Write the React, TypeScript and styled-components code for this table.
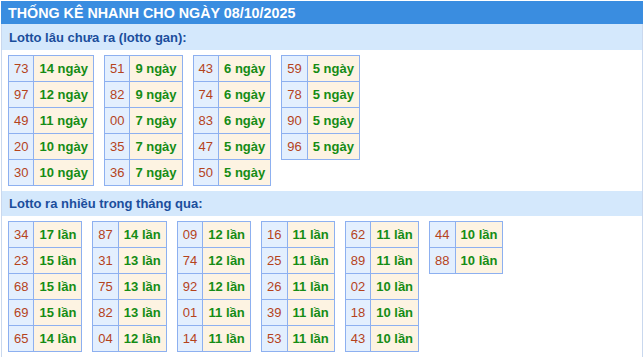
import styled, { createGlobalStyle } from "styled-components";

const GlobalStyle = createGlobalStyle`
  body {
    margin: 0;
    background: #fff;
    font-family: "Liberation Sans", Arial, sans-serif;
  }
`;

const Board = styled.div`
  width: 640px;
  margin: 1px 0 0 1px;
  border-left: 1px solid #c9d8ee;
  border-right: 1px solid #c9d8ee;
`;

const Title = styled.div`
  height: 23px;
  margin: 0 -1px;
  padding: 0 7px;
  display: flex;
  align-items: center;
  background: #3a8de0;
  color: #fff;
  font-size: 14.3px;
  font-weight: bold;
`;

const SectionHead = styled.div<{ $tall?: boolean }>`
  height: ${(p) => (p.$tall ? "26px" : "25px")};
  padding: 0 7px;
  display: flex;
  align-items: center;
  background: #d4e8fc;
  color: #1b4e9c;
  font-size: 13px;
  font-weight: bold;
`;

const Tables = styled.div`
  display: flex;
  flex-wrap: wrap;
  align-items: flex-start;
  gap: 10px;
  padding: 5px 6px 5px;
`;

const Table = styled.table`
  border-collapse: collapse;
  font-size: 13px;
`;

const Cell = styled.td<{ $kind: "num" | "val" }>`
  height: 25px;
  padding: 0 5px;
  border: 1px solid #8db0f0;
  background: ${(p) => (p.$kind === "num" ? "#e3effe" : "#fdf3e2")};
  color: ${(p) => (p.$kind === "num" ? "#b5431c" : "#158c15")};
  font-weight: ${(p) => (p.$kind === "num" ? "normal" : "bold")};
  text-align: center;
  white-space: nowrap;
`;

type Entry = [string, number];

const gan: Entry[][] = [
  [["73", 14], ["97", 12], ["49", 11], ["20", 10], ["30", 10]],
  [["51", 9], ["82", 9], ["00", 7], ["35", 7], ["36", 7]],
  [["43", 6], ["74", 6], ["83", 6], ["47", 5], ["50", 5]],
  [["59", 5], ["78", 5], ["90", 5], ["96", 5]],
];

const nhieu: Entry[][] = [
  [["34", 17], ["23", 15], ["68", 15], ["69", 15], ["65", 14]],
  [["87", 14], ["31", 13], ["75", 13], ["82", 13], ["04", 12]],
  [["09", 12], ["74", 12], ["92", 12], ["01", 11], ["14", 11]],
  [["16", 11], ["25", 11], ["26", 11], ["39", 11], ["53", 11]],
  [["62", 11], ["89", 11], ["02", 10], ["18", 10], ["43", 10]],
  [["44", 10], ["88", 10]],
];

const StatTable = ({ rows, unit }: { rows: Entry[]; unit: string }) => (
  <Table>
    <tbody>
      {rows.map(([num, count]) => (
        <tr key={num}>
          <Cell $kind="num">{num}</Cell>
          <Cell $kind="val">
            {count} {unit}
          </Cell>
        </tr>
      ))}
    </tbody>
  </Table>
);

export default function App() {
  return (
    <>
      <GlobalStyle />
      <Board>
        <Title>THỐNG KÊ NHANH CHO NGÀY 08/10/2025</Title>
        <SectionHead $tall>Lotto lâu chưa ra (lotto gan):</SectionHead>
        <Tables>
          {gan.map((rows, i) => (
            <StatTable key={i} rows={rows} unit="ngày" />
          ))}
        </Tables>
        <SectionHead>Lotto ra nhiều trong tháng qua:</SectionHead>
        <Tables>
          {nhieu.map((rows, i) => (
            <StatTable key={i} rows={rows} unit="lần" />
          ))}
        </Tables>
      </Board>
    </>
  );
}
